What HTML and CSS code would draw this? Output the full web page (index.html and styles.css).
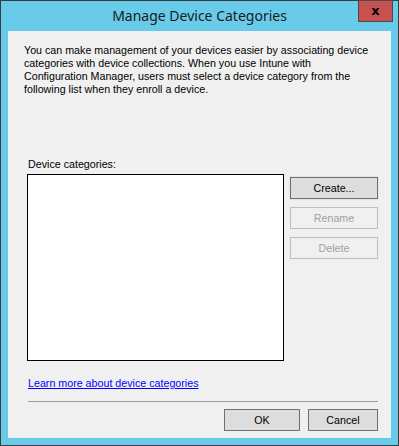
FILE: index.html
```html
<!DOCTYPE html>
<html lang="en">
<head>
    <meta charset="UTF-8">
    <title>Manage Device Categories</title>
    <link rel="stylesheet" href="styles.css">
</head>
<body>
    <div class="window">
        <div class="title-bar">
            <span class="title">Manage Device Categories</span>
            <button class="close-btn">x</button>
        </div>
        <div class="client">
            <p class="intro">You can make management of your devices easier by associating device categories with device collections. When you use Intune with Configuration Manager, users must select a device category from the following list when they enroll a device.</p>

            <div class="list-label">Device categories:</div>
            <div class="list-row">
                <div class="listbox"></div>
                <div class="side-buttons">
                    <button class="btn default">Create...</button>
                    <button class="btn" disabled>Rename</button>
                    <button class="btn" disabled>Delete</button>
                </div>
            </div>

            <a class="learn-link" href="#">Learn more about device categories</a>
            <div class="separator"></div>

            <div class="footer">
                <button class="btn ok">OK</button>
                <button class="btn cancel">Cancel</button>
            </div>
        </div>
    </div>
</body>
</html>
```

FILE: styles.css
```css
body {
    margin: 0;
    padding: 0;
    background-color: #ffffff;
}
.window {
    width: 397px;
    height: 444px;
    border: 1px solid #3b3b3b;
    background-color: #69cbea;
    position: relative;
    display: flex;
    flex-direction: column;
}
.title-bar {
    height: 30px;
    flex-shrink: 0;
    display: flex;
    justify-content: center;
}
.title {
    font-family: "Noto Sans", sans-serif;
    font-size: 14px;
    color: #1a1a1a;
    line-height: 14px;
    margin-top: 8px;
}
.close-btn {
    position: absolute;
    top: -1px;
    right: 5px;
    width: 35px;
    height: 22px;
    background-color: #c75050;
    border: 1px solid #4a4a4a;
    color: #000;
    font-family: "DejaVu Sans", sans-serif;
    font-weight: bold;
    font-size: 13px;
    line-height: 16px;
    padding: 0;
}
.client {
    margin: 0 7px;
    height: 407px;
    flex-shrink: 0;
    background-color: #f0f0f0;
    font-family: "Liberation Sans", Arial, sans-serif;
    font-size: 10.7px;
    color: #000;
    padding: 0 13px 0 20px;
    box-sizing: border-box;
    display: flex;
    flex-direction: column;
}
.client > * {
    flex-shrink: 0;
}
.intro {
    margin: 13px 0 0 -4px;
    line-height: 13px;
    width: 346px;
}
.list-label {
    margin-top: 62px;
    line-height: 13px;
}
.list-row {
    display: flex;
    margin-top: 3px;
}
.listbox {
    width: 255px;
    height: 185px;
    border: 1px solid #000;
    background-color: #fff;
    margin-left: -1px;
}
.side-buttons {
    display: flex;
    flex-direction: column;
    gap: 8px;
    margin-left: 6px;
    margin-top: 3px;
}
.btn {
    width: 88px;
    height: 22px;
    font-family: "Liberation Sans", Arial, sans-serif;
    font-size: 10.7px;
    color: #000;
    background-color: #e1e1e1;
    border: 1px solid #adadad;
    padding: 0;
}
.btn.default {
    background-color: #dddddd;
    border-color: #707070;
    box-shadow: 0 0 0 1px #e6e6e6;
}
.btn:disabled {
    color: #a0a0a0;
    background-color: #f0f0f0;
    border-color: #bfbfbf;
}
.learn-link {
    margin-top: 16px;
    line-height: 13px;
    color: #0000ff;
    align-self: flex-start;
}
.separator {
    margin-top: 11px;
    height: 1px;
    width: 350px;
    background-color: #a0a0a0;
}
.footer {
    display: flex;
    justify-content: flex-end;
    gap: 8px;
    margin-top: 7px;
}
.footer .btn {
    background-color: #dddddd;
    border-color: #707070;
}
.btn.ok {
    width: 76px;
}
.btn.cancel {
    width: 70px;
}
```
